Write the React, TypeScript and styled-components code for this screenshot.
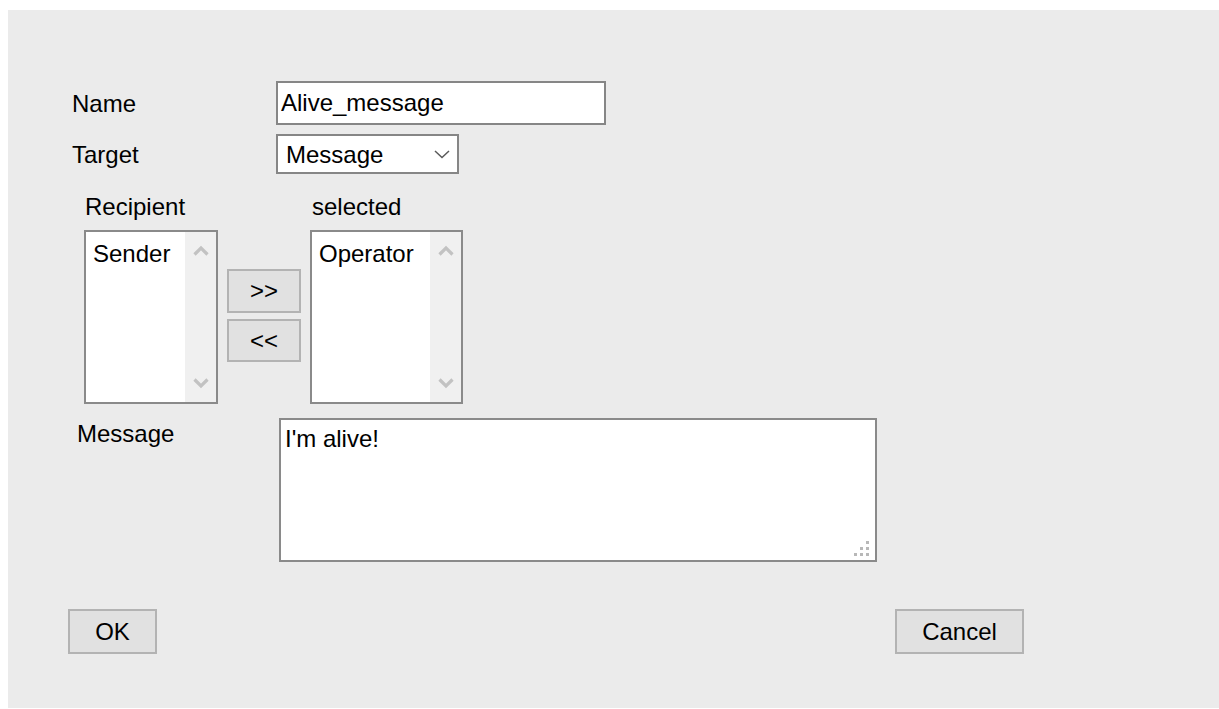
import * as React from 'react';
import styled, { createGlobalStyle } from 'styled-components';

const GlobalStyle = createGlobalStyle`
  body {
    margin: 0;
    background: #fff;
    color: #000;
    font-family: 'Liberation Sans', Arial, sans-serif;
    overflow: hidden;
  }
`;

const Title = styled.h2`
  margin: -34px 0 0 6px;
  height: 44px;
  font-size: 40px;
  line-height: 40px;
  font-weight: bold;
  white-space: nowrap;
`;

const Panel = styled.div`
  margin-left: 8px;
  height: 698px;
  box-sizing: border-box;
  padding: 71px 0 0 60px;
  background: #ebebeb;
  font-size: 24px;
`;

const FieldRow = styled.div<{ $top?: number }>`
  display: flex;
  align-items: center;
  margin: ${(p) => p.$top ?? 0}px 0 0 4px;
`;

const FieldLabel = styled.label<{ $width: number }>`
  width: ${(p) => p.$width}px;
  line-height: 27px;
`;

const TextInput = styled.input`
  width: 330px;
  height: 44px;
  box-sizing: border-box;
  border: 2px solid #868686;
  padding: 0 3px;
  background: #fff;
  font: 24px 'Liberation Sans', Arial, sans-serif;
  color: #000;
  outline: none;
`;

const SelectWrap = styled.div`
  position: relative;
  width: 183px;
  height: 40px;
`;

const Select = styled.select`
  appearance: none;
  width: 100%;
  height: 100%;
  box-sizing: border-box;
  border: 2px solid #868686;
  border-radius: 0;
  padding: 0 30px 0 8px;
  background: #fff;
  font: 24px 'Liberation Sans', Arial, sans-serif;
  color: #000;
  outline: none;
`;

const Chevron = styled.svg`
  position: absolute;
  right: 9px;
  top: 16px;
  pointer-events: none;
`;

const PickerRow = styled.div`
  display: flex;
  align-items: flex-start;
  margin: 19px 0 0 16px;
`;

const PickerColumn = styled.div`
  display: flex;
  flex-direction: column;
`;

const PickerLabel = styled.div<{ $inset: number }>`
  line-height: 27px;
  padding-left: ${(p) => p.$inset}px;
  margin-bottom: 10px;
`;

const ListBox = styled.div<{ $width: number }>`
  display: flex;
  width: ${(p) => p.$width}px;
  height: 174px;
  box-sizing: border-box;
  border: 2px solid #8a8a8a;
  background: #fff;
`;

const ListItems = styled.div`
  flex: 1;
  padding: 8px 0 0 7px;
  line-height: 27px;
  white-space: nowrap;
`;

const ScrollTrack = styled.div`
  width: 31px;
  display: flex;
  flex-direction: column;
  align-items: center;
  justify-content: space-between;
  padding: 13px 0 13px;
  background: #f0f0f0;
`;

const TransferButtons = styled.div`
  display: flex;
  flex-direction: column;
  gap: 6px;
  margin: 76px 9px 0;
`;

const Button = styled.button<{ $width: number; $height: number }>`
  width: ${(p) => p.$width}px;
  height: ${(p) => p.$height}px;
  box-sizing: border-box;
  border: 2px solid #b3b3b3;
  background: #e1e1e1;
  padding: 0;
  font: 24px 'Liberation Sans', Arial, sans-serif;
  color: #000;
`;

const MessageRow = styled.div`
  display: flex;
  align-items: flex-start;
  margin: 14px 0 0 9px;
`;

const MessageLabel = styled(FieldLabel)`
  padding-top: 2px;
`;

const TextAreaWrap = styled.div`
  position: relative;
`;

const TextArea = styled.textarea`
  display: block;
  width: 598px;
  height: 144px;
  box-sizing: border-box;
  border: 2px solid #8a8a8a;
  padding: 5px 4px;
  resize: none;
  background: #fff;
  font: 24px 'Liberation Sans', Arial, sans-serif;
  color: #000;
  outline: none;
`;

const Grip = styled.svg`
  position: absolute;
  right: 8px;
  bottom: 6px;
  pointer-events: none;
`;

const ButtonBar = styled.div`
  display: flex;
  justify-content: space-between;
  width: 956px;
  margin-top: 47px;
`;

function ScrollArrow({ up }: { up: boolean }): JSX.Element {
  return (
    <svg width="16" height="12" viewBox="0 0 16 12">
      <path
        d={up ? 'M1.5 9.5 L8 3 L14.5 9.5' : 'M1.5 2.5 L8 9 L14.5 2.5'}
        fill="none"
        stroke="#c2c2c2"
        strokeWidth="3.2"
      />
    </svg>
  );
}

interface PickerListProps { label: string, inset: number, width: number, items: string[] }
function PickerList({ label, inset, width, items }: PickerListProps): JSX.Element {
  return (
    <PickerColumn>
      <PickerLabel $inset={inset}>{label}</PickerLabel>
      <ListBox $width={width}>
        <ListItems>
          {items.map((item) => <div key={item}>{item}</div>)}
        </ListItems>
        <ScrollTrack>
          <ScrollArrow up />
          <ScrollArrow up={false} />
        </ScrollTrack>
      </ListBox>
    </PickerColumn>
  );
}

export default function App(): JSX.Element {
  return (
    <>
      <GlobalStyle />
      <Title>Add action</Title>
      <Panel>
        <FieldRow>
          <FieldLabel $width={204}>Name</FieldLabel>
          <TextInput defaultValue="Alive_message" />
        </FieldRow>
        <FieldRow $top={9}>
          <FieldLabel $width={204}>Target</FieldLabel>
          <SelectWrap>
            <Select defaultValue="Message">
              <option>Message</option>
              <option>Mail</option>
              <option>Log</option>
            </Select>
            <Chevron width="16" height="9" viewBox="0 0 16 9">
              <path d="M1 1 L8 7.5 L15 1" fill="none" stroke="#5a5a5a" strokeWidth="1.5" />
            </Chevron>
          </SelectWrap>
        </FieldRow>

        <PickerRow>
          <PickerList label="Recipient" inset={1} width={134} items={['Sender']} />
          <TransferButtons>
            <Button $width={74} $height={44}>&gt;&gt;</Button>
            <Button $width={74} $height={43}>&lt;&lt;</Button>
          </TransferButtons>
          <PickerList label="selected" inset={2} width={153} items={['Operator']} />
        </PickerRow>

        <MessageRow>
          <MessageLabel $width={202}>Message</MessageLabel>
          <TextAreaWrap>
            <TextArea defaultValue="I'm alive!" />
            <Grip width="16" height="16" viewBox="0 0 16 16">
              <g fill="#b8b8b8">
                <rect x="13" y="1" width="3" height="3" />
                <rect x="7" y="7" width="3" height="3" />
                <rect x="13" y="7" width="3" height="3" />
                <rect x="1" y="13" width="3" height="3" />
                <rect x="7" y="13" width="3" height="3" />
                <rect x="13" y="13" width="3" height="3" />
              </g>
            </Grip>
          </TextAreaWrap>
        </MessageRow>

        <ButtonBar>
          <Button $width={89} $height={45}>OK</Button>
          <Button $width={129} $height={45}>Cancel</Button>
        </ButtonBar>
      </Panel>
    </>
  );
}
